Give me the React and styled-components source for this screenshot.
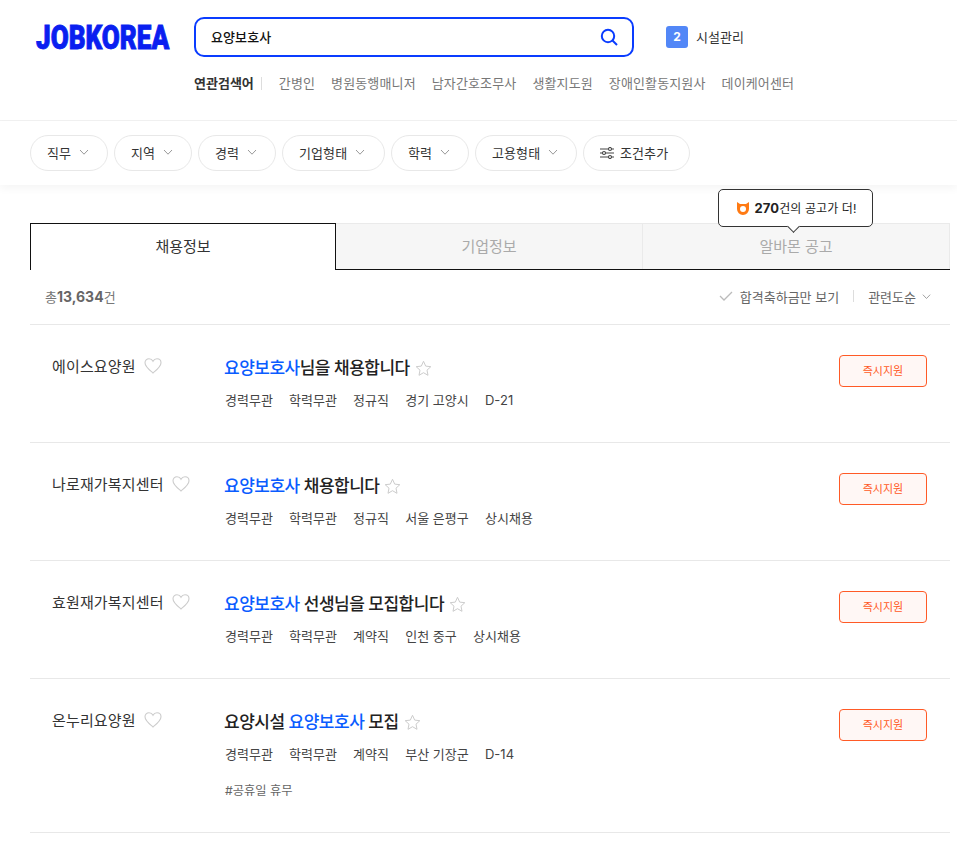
import React from "react";
import styled, { createGlobalStyle } from "styled-components";

const Global = createGlobalStyle`
  html, body { margin: 0; padding: 0; background: #fff; }
  body { font-family: "Inter", "Noto Sans CJK KR", "Noto Sans", sans-serif; color: #222; width: 957px; height: 842px; overflow: hidden; }
  * { box-sizing: border-box; }
`;

const Header = styled.header`
  height: 121px;
  border-bottom: 1px solid #f1f1f1;
  padding: 17px 0 0 36px;
`;
const TopRow = styled.div`display: flex; align-items: center; height: 40px;`;
const LogoSvg = styled.svg`width: 134px; height: 40px; flex: none; margin-right: 24px; display: block; overflow: visible;`;
const SearchBox = styled.div`
  width: 440px; height: 40px; border: 2px solid #0a3cff; border-radius: 10px;
  display: flex; align-items: center; justify-content: space-between;
  padding: 0 14px 2px 15px; flex: none;
`;
const Query = styled.span`font-size: 13px; font-weight: 500; color: #111; letter-spacing: .1px;`;
const Manage = styled.div`display: flex; align-items: center; margin-left: 32px; font-size: 13px; color: #333; gap: 8px; padding-bottom: 1px;`;
const Badge = styled.span`
  width: 22px; height: 22px; border-radius: 3px; background: #5287f7; color: #fff;
  font-family: "Inter", sans-serif; font-size: 12px; font-weight: 700;
  display: flex; align-items: center; justify-content: center;
`;
const Related = styled.div`display: flex; align-items: center; margin: 15px 0 0 158px; height: 20px; font-size: 13px; color: #777; letter-spacing: .13px;`;
const RelatedLabel = styled.strong`
  font-weight: 700; color: #333; padding-right: 8px; margin-right: 17px; position: relative; letter-spacing: 0;
  &::after { content: ""; position: absolute; right: 0; top: 4px; width: 1px; height: 13px; background: #ddd; }
`;
const RelatedItem = styled.span`margin-right: 16px; white-space: nowrap;`;

const FilterBar = styled.div`
  height: 64px; padding: 14px 30px 0; display: flex; gap: 6px; align-items: flex-start;
  box-shadow: 0 4px 8px rgba(0,0,0,.04);
`;
const Pill = styled.div`
  height: 36px; padding: 0 0 2px 16px; border: 1px solid #e8e8e8; border-radius: 18px;
  display: flex; align-items: center; gap: 7px; font-size: 13px; color: #333; background: #fff; white-space: nowrap;
  width: ${p => p.$w}px; flex: none;
  letter-spacing: .1px;
`;

const Main = styled.main`padding: 38px 7px 0 30px; position: relative;`;
const Tabs = styled.div`display: grid; grid-template-columns: 306px 307px 307px; height: 47px; border-bottom: 1px solid #111;`;
const Tab = styled.div`
  display: flex; align-items: center; justify-content: center; font-size: 15px; padding-bottom: 3px; height: ${p => p.$active ? 47 : 46}px;
  ${p => p.$active
    ? "background:#fff;color:#333;border:1px solid #111;border-bottom:none;"
    : "background:#f6f6f6;color:#aaa;border-top:1px solid #eaeaea;border-right:1px solid #eaeaea;"}
`;
const Tip = styled.div`
  position: absolute; left: 718px; top: 4px; width: 155px; height: 38px;
  background: #fff; border: 1px solid #333; border-radius: 5px;
  display: flex; align-items: center; justify-content: center; gap: 5px; padding: 0 0 2px 1px;
  font-size: 12px; color: #222; z-index: 2; letter-spacing: .1px;
  &::after {
    content: ""; position: absolute; left: 70px; bottom: -5px; width: 8px; height: 8px; background: #fff;
    border-right: 1px solid #333; border-bottom: 1px solid #333; transform: rotate(45deg);
  }
  b { font-weight: 700; font-size: 13px; }
`;
const Summary = styled.div`
  height: 55px; display: flex; align-items: center; justify-content: space-between;
  padding: 0 18px 2px 15px; border-bottom: 1px solid #e8e8e8; font-size: 13px; color: #777;
  b { font-weight: 700; color: #666; font-size: 14px; }
`;
const Side = styled.div`display: flex; align-items: center; color: #666; font-size: 13px;`;
const Sep = styled.i`display: block; width: 1px; height: 12px; background: #ddd; margin: 0 14px;`;

const Row = styled.article`
  height: ${p => p.$h}px; border-bottom: 1px solid #e8e8e8; display: flex; position: relative;
  padding: 30px 23px 0 22px;
`;
const Company = styled.div`
  width: 173px; flex: none; display: flex; align-items: flex-start; gap: 8px; padding-top: 1px; font-size: 15px; color: #333; line-height: 22px; letter-spacing: .15px;
`;
const Body = styled.div`flex: 1;`;
const Title = styled.div`display: flex; align-items: center; gap: 5px; margin: 1px 0 0 -1px; font-size: 17px; font-weight: 500; color: #222; line-height: 24px; white-space: pre; letter-spacing: -.5px;`;
const Hit = styled.span`color: #0a5cff;`;
const Meta = styled.div`display: flex; gap: 16px; margin-top: 10px; font-size: 13px; color: #444; line-height: 20px; letter-spacing: .05px;`;
const Tag = styled.div`margin-top: 17px; font-size: 12.25px; color: #666; line-height: 20px;`;
const Apply = styled.button`
  width: 88px; height: 32px; flex: none; border: 1px solid #ff5a26; border-radius: 4px; background: #fff7f5;
  color: #ff5a26; font-family: inherit; font-size: 11px; padding: 0 0 2px;
`;

const Chevron = ({ size = 12, color = "#999" }) => (
  <svg width={size} height={size} viewBox="0 0 12 12" fill="none" stroke={color} strokeWidth="1"><path d="M2 4l4 4.2L10 4" /></svg>
);
const Heart = () => (
  <svg width="18" height="18" viewBox="0 0 18 18" fill="none" stroke="#ccc" strokeWidth="1.1" style={{ marginTop: 1, flex: "none" }}>
    <path d="M9 16C6 13.4 1 9.8 1 5.8 1 3.4 2.8 1.8 5 1.8c1.7 0 3.2.9 4 2.5.8-1.6 2.3-2.5 4-2.5 2.2 0 4 1.6 4 4 0 4-5 7.6-8 10.2z" />
  </svg>
);
const Star = () => (
  <svg width="17" height="17" viewBox="0 0 17 17" fill="none" stroke="#ccc" strokeWidth="1"><path d="M8.5 1.3l2.2 4.8 5.1.6-3.8 3.5 1 5.1-4.5-2.6-4.5 2.6 1-5.1L1.2 6.7l5.1-.6z" /></svg>
);

const jobs = [
  { co: "에이스요양원", title: <><Hit>요양보호사</Hit>님을 채용합니다</>, meta: ["경력무관", "학력무관", "정규직", "경기 고양시", "D-21"], h: 118 },
  { co: "나로재가복지센터", title: <><Hit>요양보호사</Hit> 채용합니다</>, meta: ["경력무관", "학력무관", "정규직", "서울 은평구", "상시채용"], h: 118 },
  { co: "효원재가복지센터", title: <><Hit>요양보호사</Hit> 선생님을 모집합니다</>, meta: ["경력무관", "학력무관", "계약직", "인천 중구", "상시채용"], h: 118 },
  { co: "온누리요양원", title: <>요양시설 <Hit>요양보호사</Hit> 모집</>, meta: ["경력무관", "학력무관", "계약직", "부산 기장군", "D-14"], tag: "#공휴일 휴무", h: 154 },
];
const filters = [["직무", 78], ["지역", 78], ["경력", 78], ["기업형태", 103], ["학력", 78], ["고용형태", 102]];
const related = ["간병인", "병원동행매니저", "남자간호조무사", "생활지도원", "장애인활동지원사", "데이케어센터"];

export default function App() {
  return (
    <>
      <Global />
      <Header>
        <TopRow>
          <LogoSvg viewBox="0 0 134 40">
            <g transform="scale(.768 1)">
              <text x="0" y="32" fontFamily="Roboto, sans-serif" fontWeight="900" fontSize="34" fill="#0a1ff0" stroke="#0a1ff0" strokeWidth=".9">JOBKOREA</text>
            </g>
          </LogoSvg>
          <SearchBox>
            <Query>요양보호사</Query>
            <svg width="18" height="18" viewBox="0 0 18 18" fill="none" stroke="#0a3cff" strokeWidth="2" style={{ marginTop: 2 }}><circle cx="8" cy="8" r="6.2" /><path d="M12.5 12.5L17 17" /></svg>
          </SearchBox>
          <Manage><Badge>2</Badge>시설관리</Manage>
        </TopRow>
        <Related>
          <RelatedLabel>연관검색어</RelatedLabel>
          {related.map(r => <RelatedItem key={r}>{r}</RelatedItem>)}
        </Related>
      </Header>
      <FilterBar>
        {filters.map(([f, w]) => <Pill key={f} $w={w}>{f}<Chevron /></Pill>)}
        <Pill $w={107}>
          <svg width="14" height="12" viewBox="0 0 14 12" fill="none" stroke="#444" strokeWidth="1.1" style={{ marginRight: -1, marginTop: 2 }}>
            <path d="M0 2h14M0 6h14M0 10h14" />
            <circle cx="10" cy="2" r="1.5" fill="#fff" /><circle cx="4" cy="6" r="1.5" fill="#fff" /><circle cx="10" cy="10" r="1.5" fill="#fff" />
          </svg>
          조건추가
        </Pill>
      </FilterBar>
      <Main>
        <Tip>
          <svg width="14" height="14" viewBox="0 0 14 14" style={{ marginTop: 2 }}><path d="M1 1l3 2h6l3-2v7a6 6 0 0 1-12 0z" fill="#ff7a13" /><circle cx="7" cy="8" r="3" fill="#fff" /></svg>
          <span><b>270</b>건의 공고가 더!</span>
        </Tip>
        <Tabs>
          <Tab $active>채용정보</Tab>
          <Tab>기업정보</Tab>
          <Tab>알바몬 공고</Tab>
        </Tabs>
        <Summary>
          <span>총<b>13,634</b>건</span>
          <Side>
            <svg width="14" height="12" viewBox="0 0 14 12" fill="none" stroke="#bbb" strokeWidth="1.3" style={{ marginRight: 7 }}><path d="M1 6l4 4 8-8" /></svg>
            합격축하금만 보기
            <Sep />
            관련도순
            <span style={{ width: 5 }} />
            <Chevron size={11} />
          </Side>
        </Summary>
        {jobs.map(j => (
          <Row key={j.co} $h={j.h}>
            <Company>{j.co}<Heart /></Company>
            <Body>
              <Title><span>{j.title}</span><Star /></Title>
              <Meta>{j.meta.map(m => <span key={m}>{m}</span>)}</Meta>
              {j.tag && <Tag>{j.tag}</Tag>}
            </Body>
            <Apply>즉시지원</Apply>
          </Row>
        ))}
      </Main>
    </>
  );
}
